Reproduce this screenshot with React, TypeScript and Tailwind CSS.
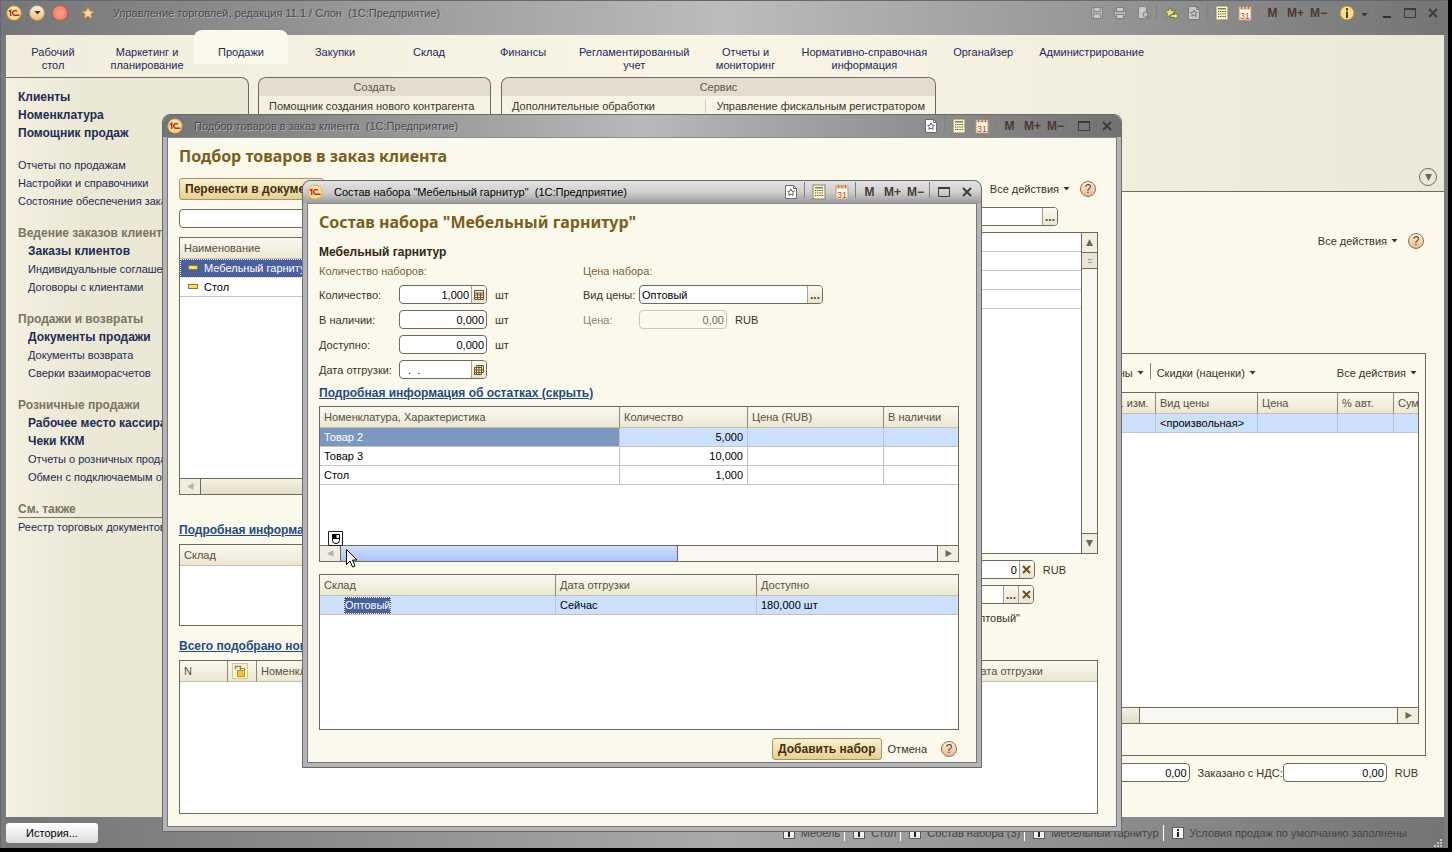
import { useState } from "react";
import type { ReactNode } from "react";
import clsx from "clsx";

const SECTIONS = [
  "Рабочий\nстол",
  "Маркетинг и\nпланирование",
  "Продажи",
  "Закупки",
  "Склад",
  "Финансы",
  "Регламентированный\nучет",
  "Отчеты и\nмониторинг",
  "Нормативно-справочная\nинформация",
  "Органайзер",
  "Администрирование",
];

type NavItem = { text: string; bold?: boolean };
type NavGroup = { title?: string; ruled?: boolean; items: NavItem[] };

const NAV: NavGroup[] = [
  {
    items: [
      { text: "Клиенты", bold: true },
      { text: "Номенклатура", bold: true },
      { text: "Помощник продаж", bold: true },
    ],
  },
  {
    items: [
      { text: "Отчеты по продажам" },
      { text: "Настройки и справочники" },
      { text: "Состояние обеспечения заказов" },
    ],
  },
  {
    title: "Ведение заказов клиентов",
    items: [
      { text: "Заказы клиентов", bold: true },
      { text: "Индивидуальные соглашения" },
      { text: "Договоры с клиентами" },
    ],
  },
  {
    title: "Продажи и возвраты",
    items: [
      { text: "Документы продажи", bold: true },
      { text: "Документы возврата" },
      { text: "Сверки взаиморасчетов" },
    ],
  },
  {
    title: "Розничные продажи",
    items: [
      { text: "Рабочее место кассира", bold: true },
      { text: "Чеки ККМ", bold: true },
      { text: "Отчеты о розничных продажах" },
      { text: "Обмен с подключаемым оборудованием" },
    ],
  },
  { title: "См. также", ruled: true, items: [{ text: "Реестр торговых документов" }] },
];

const MESSAGES = [
  "Мебель",
  "Стол",
  "Состав набора (3)",
  "Мебельный гарнитур",
  "Условия продаж по умолчанию заполнены",
];

/* ---------- icons ---------- */

function Logo() {
  return (
    <svg viewBox="0 0 16 16" className="size-4 shrink-0">
      <circle cx="8" cy="8" r="7" fill="#fbdf86" stroke="#e6b565" />
      <circle cx="7" cy="6.5" r="4.500" fill="#fff3bd" opacity="0.8" />
      <path d="M2.800 6.600 4.700 5.200V11" fill="none" stroke="#d3261c" strokeWidth="1.500" />
      <path d="M11 6.400A2.400 2.400 0 1 0 9 10.200H13.500" fill="none" stroke="#d3261c" strokeWidth="1.500" />
    </svg>
  );
}

function FavoriteDoc({ dim }: { dim?: boolean }) {
  return (
    <svg viewBox="0 0 14 14" className={clsx("size-3.5", dim && "opacity-50")}>
      <path d="M1.500 .5h8l3 3v10h-11z" fill="#fff" stroke="#6b6b6b" />
      <path d="M9.500 .5v3h3" fill="none" stroke="#6b6b6b" />
      <path d="m7 4 1 2.200 2.400.2-1.800 1.600.6 2.400L7 9.200l-2.200 1.200.6-2.400-1.800-1.600L6 6.200z" fill="none" stroke="#555" strokeWidth=".9" />
    </svg>
  );
}

function Calculator() {
  return (
    <svg viewBox="0 0 14 16" className="h-4 w-3.5">
      <rect x="1" y="1" width="12" height="14" fill="#fbf4d0" stroke="#8f8060" />
      <rect x="3" y="3" width="8" height="1.500" fill="#6a8a4e" />
      <path d="M3 6.500h8M3 9h8M3 11.500h8" stroke="#5c4a2a" strokeWidth="1.200" strokeDasharray="1.300 .9" />
    </svg>
  );
}

function Calendar() {
  return (
    <svg viewBox="0 0 14 16" className="h-4 w-3.5">
      <rect x="1" y="2" width="12" height="13" fill="#fff8ec" stroke="#b99a7d" />
      <path d="M1 3.500h12" stroke="#f0b48a" strokeWidth="2" />
      <path d="M3.500 1v3M7 1v3M10.500 1v3" stroke="#a86b3c" />
      <text x="7" y="13.500" fontSize="9" fontWeight="400" textAnchor="middle" fill="#d4440f" fontFamily="Liberation Sans">31</text>
    </svg>
  );
}

function MaximizeIcon() {
  return (
    <svg viewBox="0 0 12 12" className="size-3">
      <path d="M.5 1.500h11v9H.5z" fill="none" stroke="#3c3c3c" />
      <path d="M0 2h12" stroke="#3c3c3c" strokeWidth="2" />
    </svg>
  );
}

function CloseIcon() {
  return (
    <svg viewBox="0 0 12 12" className="size-3">
      <path d="m2 2 8 8M10 2l-8 8" stroke="#3c3c3c" strokeWidth="2" />
    </svg>
  );
}

function ClearIcon() {
  return (
    <svg viewBox="0 0 9 9" className="size-[9px]">
      <path d="m1 1 7 7M8 1 1 8" stroke="#6d4f1e" strokeWidth="2" />
    </svg>
  );
}

function GridGlyph({ offset }: { offset?: boolean }) {
  return (
    <svg viewBox="0 0 12 12" className="size-3">
      {offset ? (
        <path d="M3.500 1.500h7v7M1.500 3.500h7v7h-7zM1.500 6h9M1.500 8.500h9M3.500 1.500v9M6 1.500v9M8.500 1.500v7" fill="none" stroke="#6d5522" />
      ) : (
        <path d="M1.500 1.500h9v9h-9zM1.500 4h9M1.500 6h9M1.500 8.500h9M4.500 4v6.500M7.500 4v6.500" fill="none" stroke="#6d5522" />
      )}
    </svg>
  );
}

function Arrow({ dir, dim }: { dir: "left" | "right" | "up" | "down"; dim?: boolean }) {
  const d = {
    left: "M7.500 1v7L1 4.500z",
    right: "M1.500 1v7L8 4.500z",
    up: "M1 8h7L4.500 1z",
    down: "M1 1h7L4.500 8z",
  }[dir];
  return (
    <svg viewBox="0 0 9 9" className="size-[9px]">
      <path d={d} fill={dim ? "#b9b6a8" : "#6b675a"} />
    </svg>
  );
}

function Caret() {
  return (
    <svg viewBox="0 0 7 4" className="h-1 w-[7px]">
      <path d="M.5 0h6L3.500 3.500z" fill="#3a3424" />
    </svg>
  );
}

function ItemMark() {
  return (
    <svg viewBox="0 0 10 6" className="h-1.5 w-2.5 shrink-0">
      <rect x=".5" y=".5" width="9" height="4" fill="#f7e25a" stroke="#8c7a26" />
    </svg>
  );
}

function PadlockDoc() {
  return (
    <svg viewBox="0 0 16 16" className="size-4">
      <rect x=".5" y=".5" width="15" height="15" fill="#faf3d6" stroke="#d8c88f" />
      <path d="M3.500 6.500v-3h5v4" fill="none" stroke="#8a8a8a" strokeWidth="1.500" />
      <rect x="5.500" y="7.500" width="7" height="6" fill="#f2c62c" stroke="#c2981c" />
      <path d="M8.500 5.500h4v2" fill="none" stroke="#b08a1c" />
    </svg>
  );
}

function InfoSquare() {
  return (
    <svg viewBox="0 0 12 12" className="size-3 shrink-0">
      <rect x=".5" y=".5" width="11" height="11" fill="#f3f3f3" stroke="#5b5b5b" />
      <path d="M6 2v2M6 5v5" stroke="#222" strokeWidth="2" />
    </svg>
  );
}

/* ---------- shared parts ---------- */

function Slot({ label, children }: { label: string; children: ReactNode }) {
  return (
    <button type="button" aria-label={label} className="flex h-5 w-[23px] items-center justify-center text-[12px] font-bold text-[#4c3a30]">
      {children}
    </button>
  );
}

function Divider() {
  return (
    <span className="flex h-5 w-[5px] justify-center">
      <span className="h-4 w-px bg-[#808080]" />
    </span>
  );
}

function ServiceButtons() {
  return (
    <>
      <Slot label="Калькулятор"><Calculator /></Slot>
      <Slot label="Календарь"><Calendar /></Slot>
      <Divider />
      <Slot label="M">M</Slot>
      <Slot label="M+">M+</Slot>
      <Slot label="M−">M−</Slot>
      <Divider />
    </>
  );
}

function HelpButton() {
  return (
    <button
      type="button"
      aria-label="Справка"
      className="flex size-4 shrink-0 items-center justify-center rounded-full border border-[#8d6f50] bg-linear-to-b from-[#fdf0de] to-[#eab98c] text-[12px] leading-none text-[#5d3a1c]"
    >
      ?
    </button>
  );
}

function MenuButton({ children }: { children: ReactNode }) {
  return (
    <button type="button" className="flex items-center gap-1 whitespace-nowrap text-[#3a3424]">
      {children}
      <Caret />
    </button>
  );
}

function GoldButton({ children }: { children: ReactNode }) {
  return (
    <button
      type="button"
      className="h-[22px] rounded-[3px] border border-[#a5946a] bg-linear-to-b from-[#fbf0cf] to-[#e6cf92] px-[5px] text-[12px] font-bold whitespace-nowrap text-[#3f3011]"
    >
      {children}
    </button>
  );
}

type WindowProps = { title: string; active?: boolean; className: string; children: ReactNode };

function FloatingWindow({ title, active, className, children }: WindowProps) {
  return (
    <div
      className={clsx(
        "absolute flex flex-col rounded-t-lg border border-[#6a6a6a] bg-[#b4b4b6] px-1 pb-1",
        className,
      )}
    >
      <div
        className={clsx(
          "-mx-1 flex h-[22px] shrink-0 items-center rounded-t-lg pl-1",
          active
            ? "bg-linear-to-b from-[#e2e2e2] via-[#cfcfcf] to-[#9c9c9c]"
            : "bg-linear-to-r from-[#757575] via-[#b9b9b9] to-[#727272]",
        )}
      >
        <Logo />
        <span
          className={clsx(
            "ml-[11px] whitespace-pre",
            active ? "text-black" : "text-[#4a4a4a] [text-shadow:1px_1px_0_#b5b5b5]",
          )}
        >
          {title}
        </span>
        <div className="mr-[3px] ml-auto flex items-center">
          <Slot label="Избранное"><FavoriteDoc /></Slot>
          <Divider />
          <ServiceButtons />
          <Slot label="Развернуть"><MaximizeIcon /></Slot>
          <Slot label="Закрыть"><CloseIcon /></Slot>
        </div>
      </div>
      <div className="flex flex-1 flex-col border border-[#77777b] border-t-[#8b8b8b] bg-[#fbf9ec] pl-[11px] text-[#3a3424]">
        {children}
      </div>
    </div>
  );
}

type FieldProps = {
  id: string;
  label?: string;
  value: string;
  className?: string;
  right?: boolean;
  disabled?: boolean;
  children?: ReactNode;
};

function Field({ id, label, value, className, right, disabled, children }: FieldProps) {
  return (
    <div
      className={clsx(
        "flex h-[19px] shrink-0 overflow-hidden rounded-[4px] border",
        disabled ? "border-[#c9c6b8] bg-[#fbf9ec]" : "border-[#6e6a5c] bg-white",
        className,
      )}
    >
      <input
        id={id}
        aria-label={label}
        defaultValue={value}
        disabled={disabled}
        className={clsx(
          "w-full min-w-0 flex-1 bg-transparent px-[2px] outline-none",
          right && "text-right",
          disabled ? "text-[#6f6b5f]" : "text-black",
        )}
      />
      {children}
    </div>
  );
}

function FieldButton({ label, children }: { label: string; children: ReactNode }) {
  return (
    <button
      type="button"
      aria-label={label}
      className="flex w-[15px] shrink-0 items-center justify-center border-l border-[#a5a18f] bg-linear-to-b from-[#fbfaf3] to-[#e9e4cd] text-[12px] font-bold text-[#5b4a22]"
    >
      {children}
    </button>
  );
}

type Column = { title: ReactNode; width?: string; right?: boolean };
type Cell = { text: ReactNode; className?: string };

function Grid({ columns, rows, selected }: { columns: Column[]; rows: Cell[][]; selected?: number }) {
  return (
    <table className="w-full table-fixed border-separate border-spacing-0">
      <thead>
        <tr>
          {columns.map((c, i) => (
            <th
              key={i}
              className={clsx(
                "h-[21px] overflow-hidden border-b border-[#c5c1ae] bg-linear-to-b from-[#fbf9f0] to-[#ebe7d3] px-1 text-left font-normal whitespace-nowrap text-[#5a5038]",
                i < columns.length - 1 && "border-r border-r-[#8b8675]",
                c.width,
              )}
            >
              {c.title}
            </th>
          ))}
        </tr>
      </thead>
      <tbody>
        {rows.map((row, r) => (
          <tr key={r} className={r === selected ? "bg-[#cbe0fd]" : "bg-white"}>
            {row.map((cell, i) => (
              <td
                key={i}
                className={clsx(
                  "h-[19px] overflow-hidden border-b border-[#c3c3c3] px-1 whitespace-nowrap",
                  i < row.length - 1 && "border-r",
                  columns[i].right && "text-right",
                  cell.className ?? "text-black",
                )}
              >
                {cell.text}
              </td>
            ))}
          </tr>
        ))}
      </tbody>
    </table>
  );
}

function HScroll({ thumb, blue }: { thumb: string; blue?: boolean }) {
  return (
    <div className="mt-auto flex h-4 shrink-0 border-t border-[#6e6a5c] bg-[#f8f7f1]">
      <button type="button" aria-label="Влево" className="flex w-[21px] items-center justify-center border-r border-[#6e6a5c] bg-[#f1eee0]">
        <Arrow dir="left" dim />
      </button>
      <div
        className={clsx(
          "border-r border-[#6e6a5c]",
          blue ? "bg-linear-to-b from-[#cfe0ff] to-[#a9c3fb]" : "bg-linear-to-b from-[#f5f2e4] to-[#e2ddc6]",
          thumb,
        )}
      />
      <button type="button" aria-label="Вправо" className="ml-auto flex w-[21px] items-center justify-center border-l border-[#6e6a5c] bg-[#f1eee0]">
        <Arrow dir="right" />
      </button>
    </div>
  );
}

function SectionLink({ children }: { children: ReactNode }) {
  return (
    <a href="#" className="text-[12px] font-bold whitespace-nowrap text-[#1f4b86] underline">
      {children}
    </a>
  );
}

function Heading({ children }: { children: ReactNode }) {
  return (
    <h1 className="font-['Noto_Sans','Liberation_Sans',sans-serif] text-[16px] leading-6 font-bold whitespace-nowrap text-[#7b601b]">
      {children}
    </h1>
  );
}

/* ---------- main window ---------- */

function MainTitleBar() {
  return (
    <div className="-mr-1 -ml-[5px] flex h-[34px] shrink-0 items-start rounded-t bg-linear-to-r from-[#767676] via-[#bcbcbc] to-[#747474] pt-0.5 pr-1 pl-[5px]">
      <div className="flex h-5 items-center">
        <Logo />
        <button type="button" aria-label="Главное меню" className="ml-[7px] flex size-4 items-center justify-center rounded-full border border-[#b89560] bg-linear-to-b from-[#fff2d8] to-[#e9bc7c]">
          <Caret />
        </button>
        <span className="ml-[7px] size-4 rounded-full border border-[#b9604c] bg-radial from-[#f9a48d] to-[#f0705a]" />
        <svg viewBox="0 0 14 14" className="ml-[13px] size-3.5">
          <path d="m7 1 1.800 4 4.200.4-3.200 2.800 1 4.300L7 10.200l-3.800 2.300 1-4.300L1 5.400 5.200 5z" fill="#fbd9a2" stroke="#c98f43" />
        </svg>
        <span className="ml-[18px] whitespace-pre text-[#4a4a4a] [text-shadow:1px_1px_0_#b5b5b5]">
          {"Управление торговлей, редакция 11.1 / Слон  (1С:Предприятие)"}
        </span>
      </div>
      <div className="ml-auto flex items-center">
        <Slot label="Сохранить">
          <svg viewBox="0 0 14 14" className="size-3.5 opacity-60">
            <path d="M1.500 1.500h11v11h-11z" fill="#ccc" stroke="#777" />
            <path d="M4 1.500h6v4H4zM3.500 8h7v4.500h-7z" fill="#eee" stroke="#777" />
          </svg>
        </Slot>
        <Slot label="Печать">
          <svg viewBox="0 0 14 14" className="size-3.5 opacity-60">
            <path d="M3.500 1.500h7v4h-7z" fill="#eee" stroke="#777" />
            <path d="M1.500 5.500h11v5h-11z" fill="#ccc" stroke="#777" />
            <path d="M3.500 8.500h7v4h-7z" fill="#eee" stroke="#777" />
          </svg>
        </Slot>
        <Slot label="Просмотр">
          <svg viewBox="0 0 14 14" className="size-3.5 opacity-60">
            <path d="M2.500 .5h6l2 2v10h-8z" fill="#eee" stroke="#777" />
            <circle cx="9.500" cy="8.500" r="2.500" fill="#ddd" stroke="#777" />
            <path d="m11 10.500 2 2.500" stroke="#777" strokeWidth="1.500" />
          </svg>
        </Slot>
        <Divider />
        <Slot label="Добавить в избранное">
          <svg viewBox="0 0 14 14" className="size-3.5">
            <path d="m6 1 1.500 3.600L11.500 5 8.500 7.600l.9 3.900L6 9.400l-3.400 2.100.9-3.900L.5 5l4-.4z" fill="#e8dc8a" stroke="#7d7a2a" />
            <path d="M7 8.500h4v-2l3 3.500-3 3.500v-2H7z" fill="#d8ec9a" stroke="#4e7a22" strokeWidth=".8" />
          </svg>
        </Slot>
        <Slot label="Избранное"><FavoriteDoc dim /></Slot>
        <Divider />
        <ServiceButtons />
        <Slot label="О программе">
          <svg viewBox="0 0 16 16" className="size-4">
            <circle cx="8" cy="8" r="7" fill="#f8dc8c" stroke="#b48c3a" />
            <path d="M8 3v2.500M8 6.500V13" stroke="#4c4620" strokeWidth="2" />
          </svg>
        </Slot>
        <span className="flex w-3 justify-center pt-1"><Caret /></span>
        <Divider />
        <Slot label="Свернуть">
          <span className="mt-2 h-0.5 w-2 bg-[#2e2e2e]" />
        </Slot>
        <Slot label="Развернуть"><MaximizeIcon /></Slot>
        <Slot label="Закрыть"><CloseIcon /></Slot>
      </div>
    </div>
  );
}

function SectionTabs({ current, onSelect }: { current: string; onSelect: (s: string) => void }) {
  return (
    <nav className="flex h-[42px] shrink-0">
      {SECTIONS.map((s) => (
        <button
          key={s}
          type="button"
          onClick={() => onSelect(s)}
          className={clsx(
            "flex min-w-[94px] items-start justify-center px-[9px] leading-[13px] whitespace-pre text-[#232a55]",
            s === current ? "-mt-[5px] h-[34px] rounded-t-lg bg-[#fbf9ec] pt-4" : "pt-[11px]",
          )}
        >
          {s}
        </button>
      ))}
    </nav>
  );
}

function Sidebar() {
  return (
    <aside className="w-[243px] shrink-0 rounded-tr-lg border-t border-r border-[#6e6a5c] bg-linear-to-r from-[#f4f1e1] to-[#ebe8d6] to-30% pt-2.5 pl-3">
      {NAV.map((group, i) => (
        <section key={i} className="mb-3.5">
          {group.title && (
            <h2
              className={clsx(
                "h-[18px] text-[12px] leading-[18px] font-bold whitespace-nowrap text-[#7a7462]",
                group.ruled && "border-b border-[#7a7462]",
              )}
            >
              {group.title}
            </h2>
          )}
          <ul className={clsx(group.title && !group.ruled && "pl-2.5")}>
            {group.items.map((item) => (
              <li key={item.text} className="h-[18px] leading-[18px] whitespace-nowrap">
                <a href="#" className={clsx("text-[#232a55]", item.bold && "text-[12px] font-bold")}>
                  {item.text}
                </a>
              </li>
            ))}
          </ul>
        </section>
      ))}
    </aside>
  );
}

function ActionPanel({ title, actions, className }: { title: string; actions: string[]; className?: string }) {
  return (
    <section className={clsx("rounded-t-lg border border-b-0 border-[#6e6a5c]", className)}>
      <h2 className="h-[18px] rounded-t-lg bg-[#e3ddd0] text-center leading-[18px] text-[#5e5846]">{title}</h2>
      <div className="flex justify-between px-2.5 pt-[3px]">
        {actions.map((a, i) => (
          <a key={a} href="#" className={clsx("leading-[14px] whitespace-nowrap text-[#3a3424]", i > 0 && "border-l border-[#d2cdbb] pl-2.5")}>
            {a}
          </a>
        ))}
      </div>
    </section>
  );
}

function OrderForm() {
  return (
    <div className="flex flex-1 flex-col bg-[#fbf9ec] pr-[18px] pb-[35px] pl-2.5">
      <div className="mt-[38px] flex h-[22px] items-center justify-end gap-2.5 pr-0.5">
        <MenuButton>Все действия</MenuButton>
        <HelpButton />
      </div>
      <div className="mt-[101px] flex flex-1 flex-col border border-[#6e6a5c] px-1.5 pb-[31px]">
        <div className="flex h-[38px] items-center justify-end gap-1 pr-0.5">
          <MenuButton>Цены</MenuButton>
          <Divider />
          <MenuButton>Скидки (наценки)</MenuButton>
          <span className="w-[73px]" />
          <MenuButton>Все действия</MenuButton>
        </div>
        <div className="flex flex-1 flex-col border border-[#6e6a5c] bg-white">
          <Grid
            selected={0}
            columns={[
              { title: "Номенклатура" },
              { title: "Ед. изм.", width: "w-[53px]" },
              { title: "Вид цены", width: "w-[102px]" },
              { title: "Цена", width: "w-20" },
              { title: "% авт.", width: "w-14" },
              { title: "Сумма", width: "w-6" },
            ]}
            rows={[
              [
                { text: "" },
                { text: "" },
                { text: "<произвольная>" },
                { text: "" },
                { text: "" },
                { text: "" },
              ],
            ]}
          />
          <HScroll thumb="w-[74%]" />
        </div>
      </div>
      <div className="mt-[7px] flex items-center justify-end gap-2 pr-2">
        <Field id="order-total" label="Итого" value="0,00" right className="w-[104px]" />
        <div className="flex items-center">
          <label htmlFor="order-vat" className="whitespace-nowrap text-[#3a3424]">Заказано с НДС:</label>
          <Field id="order-vat" value="0,00" right className="w-[104px]" />
        </div>
        <span className="text-[#3a3424]">RUB</span>
      </div>
    </div>
  );
}

function StatusBar() {
  return (
    <footer className="flex h-[31px] shrink-0 items-center bg-linear-to-r from-[#757575] via-[#aaaaaa] to-[#747474]">
      <button type="button" className="h-5 w-[92px] rounded-[3px] bg-linear-to-b from-white to-[#dcdcdc] text-black">
        История...
      </button>
      <ul className="ml-auto flex items-center text-[#444]">
        {MESSAGES.map((m, i) => (
          <li key={m} className={clsx("flex items-center gap-1.5 whitespace-nowrap", i > 0 && "ml-1 border-l border-white pl-2")}>
            <InfoSquare />
            {m}
          </li>
        ))}
      </ul>
      <svg viewBox="0 0 10 10" className="mr-px ml-[26px] size-2.5 self-end">
        <path d="M7 1h2v2H7zM4 4h2v2H4zM7 4h2v2H7zM1 7h2v2H1zM4 7h2v2H4zM7 7h2v2H7z" fill="#c4c4c4" />
      </svg>
    </footer>
  );
}

/* ---------- goods picker ---------- */

function PickerWindow() {
  return (
    <FloatingWindow title={"Подбор товаров в заказ клиента  (1С:Предприятие)"} className="top-[114px] left-[162px] h-[718px] w-[960px]">
      <div className="flex flex-1 flex-col pt-1.5 pr-[18px] pb-3">
        <Heading>Подбор товаров в заказ клиента</Heading>
        <div className="mt-2.5 flex h-[22px] items-center justify-between">
          <GoldButton>Перенести в документ</GoldButton>
          <div className="flex items-center gap-2.5 pr-0.5">
            <MenuButton>Все действия</MenuButton>
            <HelpButton />
          </div>
        </div>
        <div className="mt-1.5 flex gap-4">
          <div className="flex w-[420px] flex-col pt-[3px]">
            <Field id="search" label="Поиск" value="" />
            <div className="mt-[9px] flex h-[258px] flex-col border border-[#6e6a5c] bg-white">
              <Grid
                columns={[{ title: "Наименование" }]}
                rows={[
                  [
                    {
                      className: "bg-[#4a5f9e] text-white outline-1 -outline-offset-1 outline-dotted outline-white",
                      text: <span className="flex items-center gap-1.5 pl-1"><ItemMark />Мебельный гарнитур</span>,
                    },
                  ],
                  [{ text: <span className="flex items-center gap-1.5 pl-1"><ItemMark />Стол</span> }],
                ]}
              />
              <HScroll thumb="w-[300px]" />
            </div>
            <div className="mt-[27px] h-4"><SectionLink>Подробная информация об остатках (скрыть)</SectionLink></div>
            <div className="mt-1.5 h-[82px] border border-[#6e6a5c] bg-white">
              <Grid columns={[{ title: "Склад" }]} rows={[]} />
            </div>
          </div>
          <div className="flex flex-1 flex-col pt-px">
            <Field id="price-kind" label="Вид цены" value="" className="mr-10">
              <FieldButton label="Выбрать">...</FieldButton>
            </Field>
            <div className="mt-1.5 flex h-[322px] border border-[#6e6a5c] bg-white">
              <div className="flex-1">
                {[0, 1, 2, 3].map((n) => (
                  <div key={n} className="h-[19px] border-b border-[#c3c3c3]" />
                ))}
              </div>
              <div className="flex w-4 flex-col border-l border-[#6e6a5c] bg-[#f8f7f1]">
                <button type="button" aria-label="Вверх" className="flex h-5 items-center justify-center border-b border-[#6e6a5c] bg-[#f1eee0]"><Arrow dir="up" /></button>
                <span className="flex h-4 items-center justify-center border-b border-[#6e6a5c] bg-[#e9e5d2]">
                  <span className="h-1 w-1 border-y border-[#a09a86]" />
                </span>
                <button type="button" aria-label="Вниз" className="mt-auto flex h-5 items-center justify-center border-t border-[#6e6a5c] bg-[#f1eee0]"><Arrow dir="down" /></button>
              </div>
            </div>
            <div className="mt-1.5 flex items-center justify-end gap-2 pr-8">
              <Field id="sum" label="Сумма" value="0" right className="w-[120px]">
                <FieldButton label="Очистить"><ClearIcon /></FieldButton>
              </Field>
              <span>RUB</span>
            </div>
            <Field id="price-filter" label="Отбор" value="" className="mt-1.5 mr-16 w-[180px] self-end">
              <FieldButton label="Выбрать">...</FieldButton>
              <FieldButton label="Очистить"><ClearIcon /></FieldButton>
            </Field>
            <p className="mt-1.5 pr-[78px] text-right">"Оптовый"</p>
          </div>
        </div>
        <div className="mt-3 h-4"><SectionLink>Всего подобрано номенклатуры</SectionLink></div>
        <div className="mt-1.5 flex-1 border border-[#6e6a5c] bg-white">
          <Grid
            columns={[
              { title: "N", width: "w-12" },
              { title: <PadlockDoc />, width: "w-[29px]" },
              { title: "Номенклатура" },
              { title: "Дата отгрузки", width: "w-32" },
            ]}
            rows={[]}
          />
        </div>
      </div>
    </FloatingWindow>
  );
}

/* ---------- kit contents dialog ---------- */

function QuantityRow({ id, label, value, children, unit }: { id: string; label: string; value: string; children?: ReactNode; unit?: string }) {
  return (
    <div className="flex items-center">
      <label htmlFor={id} className="w-20 whitespace-nowrap">{label}</label>
      <Field id={id} value={value} right={Boolean(unit)} className="w-[88px]">{children}</Field>
      {unit && <span className="ml-2">{unit}</span>}
    </div>
  );
}

function KitDialog() {
  return (
    <FloatingWindow active title={'Состав набора "Мебельный гарнитур"  (1С:Предприятие)'} className="top-[180px] left-[302px] h-[588px] w-[680px]">
      <div className="flex flex-1 flex-col pt-1.5 pr-[17px] pb-[2px]">
        <Heading>Состав набора "Мебельный гарнитур"</Heading>
        <h2 className="mt-2.5 text-[12px] leading-4 font-bold text-[#2f2812]">Мебельный гарнитур</h2>
        <div className="mt-1 flex">
          <div className="flex w-[264px] flex-col gap-1.5">
            <p className="h-[15px] leading-[15px] text-[#7c6135]">Количество наборов:</p>
            <QuantityRow id="qty" label="Количество:" value="1,000" unit="шт">
              <FieldButton label="Калькулятор"><GridGlyph /></FieldButton>
            </QuantityRow>
            <QuantityRow id="stock" label="В наличии:" value="0,000" unit="шт" />
            <QuantityRow id="free" label="Доступно:" value="0,000" unit="шт" />
            <QuantityRow id="ship" label="Дата отгрузки:" value="  .  ." >
              <FieldButton label="Календарь"><GridGlyph offset /></FieldButton>
            </QuantityRow>
          </div>
          <div className="flex flex-col gap-1.5">
            <p className="h-[15px] leading-[15px] text-[#7c6135]">Цена набора:</p>
            <div className="flex items-center">
              <label htmlFor="kind" className="w-14 whitespace-nowrap">Вид цены:</label>
              <Field id="kind" value="Оптовый" className="w-[184px]">
                <FieldButton label="Выбрать">...</FieldButton>
              </Field>
            </div>
            <div className="flex items-center">
              <label htmlFor="price" className="w-14 text-[#8a8570]">Цена:</label>
              <Field id="price" value="0,00" right disabled className="w-[88px]" />
              <span className="ml-2">RUB</span>
            </div>
          </div>
        </div>
        <div className="mt-1.5 h-4"><SectionLink>Подробная информация об остатках (скрыть)</SectionLink></div>
        <div className="relative mt-[5px] flex flex-1 flex-col border border-[#6e6a5c] bg-white">
          <Grid
            selected={0}
            columns={[
              { title: "Номенклатура, Характеристика", width: "w-[300px]" },
              { title: "Количество", width: "w-32", right: true },
              { title: "Цена (RUB)", width: "w-[136px]" },
              { title: "В наличии" },
            ]}
            rows={[
              [{ text: "Товар 2", className: "bg-[#7b98c3] text-white" }, { text: "5,000" }, { text: "" }, { text: "" }],
              [{ text: "Товар 3" }, { text: "10,000" }, { text: "" }, { text: "" }],
              [{ text: "Стол" }, { text: "1,000" }, { text: "" }, { text: "" }],
            ]}
          />
          <HScroll thumb="w-[337px]" blue />
          <svg viewBox="0 0 32 38" className="absolute bottom-[-8px] left-2 h-[38px] w-8">
            <path d="M.5 .5h14v14H.5z" fill="#fff" stroke="#222" />
            <path d="M4.500 3.500h7v6a3.500 3 0 0 1-7 0zM8 3.500v4M4.500 7.500h7" fill="#fff" stroke="#000" />
            <path d="M4.500 3.500H8v4H4.500z" />
            <path d="M18.500 18.500v15l3.500-3.500 2.500 6 2.500-1-2.500-6H29z" fill="#fff" stroke="#000" />
          </svg>
        </div>
        <div className="mt-3 flex flex-1 flex-col border border-[#6e6a5c] bg-white">
          <Grid
            selected={0}
            columns={[
              { title: "Склад", width: "w-[236px]" },
              { title: "Дата отгрузки", width: "w-[201px]" },
              { title: "Доступно" },
            ]}
            rows={[
              [
                {
                  text: (
                    <span className="ml-5 inline-block bg-[#4a5f9e] px-px leading-[17px] text-white outline-1 -outline-offset-1 outline-dotted outline-white">
                      Оптовый
                    </span>
                  ),
                },
                { text: "Сейчас" },
                { text: "180,000 шт" },
              ],
            ]}
          />
        </div>
        <div className="mt-2 flex items-center justify-end pr-0.5">
          <GoldButton>Добавить набор</GoldButton>
          <button type="button" className="mr-3.5 ml-1.5">Отмена</button>
          <HelpButton />
        </div>
      </div>
    </FloatingWindow>
  );
}

export default function App() {
  const [section, setSection] = useState("Продажи");

  return (
    <div className="relative min-h-screen overflow-hidden bg-black pr-1 pb-1 font-['Liberation_Sans',Arial,sans-serif] text-[11px] leading-4">
      <div className="flex min-h-[calc(100vh-4px)] flex-col border border-r-0 border-b-0 border-[#5f6a75] bg-[#7b7b7b] pr-1 pl-[5px]">
        <MainTitleBar />
        <div className="flex flex-1 flex-col bg-linear-to-r from-[#f1eddc] via-[#f9f6e7] to-[#ebe8d8]">
          <SectionTabs current={section} onSelect={setSection} />
          <div className="flex flex-1">
            <Sidebar />
            <div className="flex flex-1 flex-col">
              <div className="flex h-[115px] items-stretch gap-2.5 border-b border-[#6e6a5c] pl-[9px]">
                <ActionPanel title="Создать" actions={["Помощник создания нового контрагента"]} className="w-[233px]" />
                <ActionPanel title="Сервис" actions={["Дополнительные обработки", "Управление фискальным регистратором"]} className="w-[435px]" />
                <button type="button" aria-label="Развернуть панель" className="mt-auto mr-[7px] mb-[5px] ml-auto flex size-[18px] items-center justify-center rounded-full border border-[#6e6a5c]">
                  <Arrow dir="down" />
                </button>
              </div>
              <OrderForm />
            </div>
          </div>
        </div>
        <StatusBar />
      </div>
      <PickerWindow />
      <KitDialog />
    </div>
  );
}
